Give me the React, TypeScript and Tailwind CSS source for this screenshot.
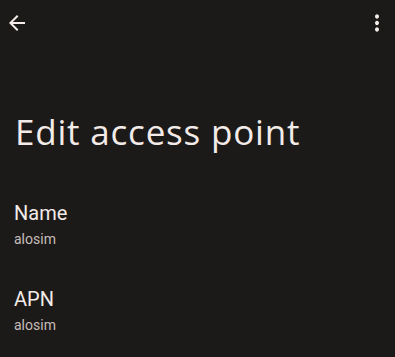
import React from "react";

export default function App() {
  return (
    <div className="w-[395px] h-[357px] bg-[#1c1a19] overflow-hidden" style={{ fontFamily: "Roboto, sans-serif" }}>
      <div className="flex items-center justify-between h-[44px] pl-[5px] pr-[6px] pt-[1px]">
        <svg width="24" height="24" viewBox="0 0 24 24" fill="#f3ece9">
          <path d="M20 11H7.83l5.59-5.59L12 4l-8 8 8 8 1.41-1.41L7.83 13H20v-2z" />
        </svg>
        <svg width="24" height="26" viewBox="0 0 24 24" fill="#f3ece9" preserveAspectRatio="none">
          <path d="M12 8c1.1 0 2-.9 2-2s-.9-2-2-2-2 .9-2 2 .9 2 2 2zm0 2c-1.1 0-2 .9-2 2s.9 2 2 2 2-.9 2-2-.9-2-2-2zm0 6c-1.1 0-2 .9-2 2s.9 2 2 2 2-.9 2-2-.9-2-2-2z" />
        </svg>
      </div>
      <div className="pl-[15px] pt-[68px]">
        <div
          className="text-[35px] leading-[40px] tracking-[0.8px] text-[#f3ebe8]"
          style={{ fontFamily: "'Open Sans', sans-serif" }}
        >
          Edit access point
        </div>
      </div>
      <div className="pl-[14px] pt-[49px] flex flex-col gap-[38px]">
        <div className="flex flex-col">
          <div className="text-[20px] leading-[24px] text-[#f3ebe8]">Name</div>
          <div className="mt-[4px] text-[14px] leading-[20px] text-[#c7bdb9]">alosim</div>
        </div>
        <div className="flex flex-col">
          <div className="text-[20px] leading-[24px] text-[#f3ebe8]">APN</div>
          <div className="mt-[4px] text-[14px] leading-[20px] text-[#c7bdb9]">alosim</div>
        </div>
      </div>
    </div>
  );
}
